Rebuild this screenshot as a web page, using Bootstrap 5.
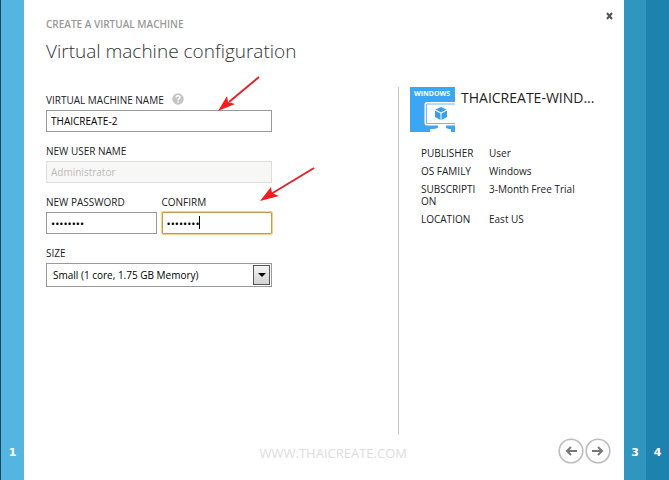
<!DOCTYPE html>
<html lang="en">
<head>
<meta charset="utf-8">
<meta name="viewport" content="width=device-width, initial-scale=1">
<title>Create a virtual machine</title>
<link href="https://cdn.jsdelivr.net/npm/bootstrap@5.3.0/dist/css/bootstrap.min.css" rel="stylesheet">
<style>
body { font: 10px/14px "Open Sans", "Noto Sans", sans-serif; color: #222; background: #fff; }
.step { width: 24px; padding-bottom: 20px; font: 700 11px/14px "DejaVu Sans", sans-serif; color: #fff; text-decoration: none; flex: none; }
.step-1 { background: #54b6e0; border-left: 1px solid #17475e; }
.step-3 { background: #3095bf; width: 22px; }
.step-4 { background: #1e82af; width: 23px; }
.wizard { padding: 17px 12px 16px 22px; }
.crumb { color: #999; font-weight: 600; }
h1 { font-size: 19px; line-height: 28px; font-weight: 300; color: #333; margin: 6px 0 22px; }
.close-x { top: 9px; right: 9px; width: 12px; height: 14px; }
.bare { border: 0; background: none; padding: 0; line-height: 0; }
.form-area { padding-top: 6px; }
.fields { max-width: 226px; }
.field { margin-bottom: 12px; }
.field label { line-height: 14px; margin-bottom: 3px; display: inline-block; }
.field .form-control, .field .form-select { height: 22px; min-height: 0; padding: 0 4px; border: 1px solid #999; border-radius: 0; font-size: 10px; line-height: 14px; color: #000; background: #fff; }
.field .form-control[type=password] { font-size: 11px; }
.field .form-control:disabled { background: #f7f7f6; border-color: #ddd; color: #bbb; }
.field .form-control.active-input { border-color: #c69a4b; box-shadow: 0 0 0 1px #f3d28c; border-radius: 1px; }
.field .form-select { height: 24px; padding: 0 24px 0 6px; appearance: none; }
.pair { gap: 5px; }
.caret-line { left: 37px; top: 4px; width: 1px; height: 13px; background: #000; }
.drop { right: 2px; top: 2px; width: 17px; height: 20px; border: 1px solid #555; background: linear-gradient(#f4f4f4, #d2d2d2); pointer-events: none; }
.pointer { overflow: visible; pointer-events: none; }
.pointer-1 { left: 171px; top: -17px; }
.pointer-2 { left: 97px; top: -29px; }
.summary { width: 214px; padding-left: 11px; border-left: 1px solid #c8c8c8; flex: none; }
.tile { margin-right: 6px; }
.summary-title { font-size: 14px; line-height: 20px; padding-top: 1px; }
.facts { margin: 15px 0 0 11px; }
.facts dt { width: 58px; font-weight: 400; word-break: break-all; margin-right: 10px; line-height: 12px; }
.facts dd { margin: 0; line-height: 12px; }
.facts div { margin-bottom: 6px; }
.foot { padding-top: 3px; }
.watermark { color: #ddd; font-size: 13px; line-height: 18px; margin-right: 151px; padding-top: 6px; }
</style>
<script src="https://cdn.jsdelivr.net/npm/bootstrap@5.3.0/dist/js/bootstrap.bundle.min.js"></script>
</head>
<body class="d-flex min-vh-100">
<a href="#" class="step step-1 d-flex align-items-end justify-content-center">1</a>
<main class="wizard flex-grow-1 position-relative d-flex flex-column">
  <button type="button" class="bare close-x position-absolute" aria-label="Close">
    <svg width="7" height="8" viewBox="0 0 7 8"><path d="M1 1l5 6M6 1L1 7" stroke="#555" stroke-width="2"/></svg>
  </button>
  <div class="crumb">CREATE A VIRTUAL MACHINE</div>
  <h1>Virtual machine configuration</h1>
  <div class="d-flex flex-grow-1">
    <form class="form-area flex-grow-1">
      <div class="fields">
        <div class="field">
          <div class="d-flex"><label for="vm">VIRTUAL MACHINE NAME</label>
            <svg class="ms-2" width="12" height="12" viewBox="0 0 12 12"><circle cx="6" cy="6" r="5.7" fill="#c4c4c4"/><path d="M4.1 4.5C4.1 2.2 8 2.1 8 4.4 8 5.8 6.1 5.8 6.1 7.2M6.1 8.2v1.5" fill="none" stroke="#fff" stroke-width="1.5"/></svg>
          </div>
          <div class="position-relative">
            <input id="vm" class="form-control" type="text" value="THAICREATE-2">
            <svg class="pointer pointer-1 position-absolute" width="43" height="35" viewBox="0 0 43 35"><path d="M42 -16L12 9" stroke="#df2529" stroke-width="2"/><path d="M1 18L10 3 11 9 18 11Z" fill="#f51c1f"/></svg>
          </div>
        </div>
        <div class="field">
          <label for="user">NEW USER NAME</label>
          <input id="user" class="form-control" type="text" value="Administrator" disabled>
        </div>
        <div class="field d-flex pair">
          <div class="flex-fill">
            <label for="pw">NEW PASSWORD</label>
            <input id="pw" class="form-control" type="password" value="password">
          </div>
          <div class="flex-fill">
            <label for="pw2">CONFIRM</label>
            <div class="position-relative">
              <input id="pw2" class="form-control active-input" type="password" value="password">
              <span class="caret-line position-absolute"></span>
              <svg class="pointer pointer-2 position-absolute" width="56" height="35" viewBox="0 0 56 35"><path d="M55 -15L12 11" stroke="#df2529" stroke-width="2"/><path d="M1 18L12 4 13 10 20 13Z" fill="#f51c1f"/></svg>
            </div>
          </div>
        </div>
        <div class="field">
          <label for="size">SIZE</label>
          <div class="position-relative">
            <select id="size" class="form-select"><option>Small (1 core, 1.75 GB Memory)</option></select>
            <span class="drop position-absolute d-flex align-items-center justify-content-center"><svg width="8" height="4" viewBox="0 0 8 4"><path d="M0 0h8L4 4z"/></svg></span>
          </div>
        </div>
      </div>
    </form>
    <aside class="summary">
      <div class="d-flex">
        <svg class="tile flex-shrink-0" width="45" height="45" viewBox="0 0 45 45">
          <path d="M0 0h45v45H0z" fill="#3ca6f2"/>
          <text x="4" y="9" font-family="Open Sans, sans-serif" font-size="7" font-weight="700" fill="#fff">WINDOWS</text>
          <path d="M45 15H17Q14.500 15 14.500 17.500V36Q14.500 38.500 17 38.500H45z" fill="#fff"/>
          <path d="M45 17H16.500V36.500H45" fill="none" stroke="#6cbcf5"/>
          <path d="M28 38h8v2q0 2 5 2v3H20v-3q8 0 8-2z" fill="#fff"/>
          <path d="M31 20l5.500 2.500L31 25.500 25.500 22.500zM25 23.500l5.500 3V33L25 30zM37 23.500V30l-5.500 3v-6.500z" fill="#36a0ee"/>
        </svg>
        <div class="summary-title text-nowrap">THAICREATE-WIND...</div>
      </div>
      <dl class="facts">
        <div class="d-flex"><dt>PUBLISHER</dt><dd>User</dd></div>
        <div class="d-flex"><dt>OS FAMILY</dt><dd>Windows</dd></div>
        <div class="d-flex"><dt>SUBSCRIPTION</dt><dd>3-Month Free Trial</dd></div>
        <div class="d-flex"><dt>LOCATION</dt><dd>East US</dd></div>
      </dl>
    </aside>
  </div>
  <footer class="foot d-flex justify-content-end mt-auto">
    <div class="watermark">WWW.THAICREATE.COM</div>
    <button type="button" class="bare" aria-label="Previous"><svg width="27" height="26" viewBox="0 0 27 26"><circle cx="13" cy="13" r="11.800" fill="#fff" stroke="#bdbdbd" stroke-width="1.600"/><path d="M19 13H9M13 9l-4 4 4 4" fill="none" stroke="#777" stroke-width="2"/></svg></button>
    <button type="button" class="bare" aria-label="Next"><svg width="27" height="26" viewBox="0 0 27 26"><circle cx="13" cy="13" r="11.800" fill="#fff" stroke="#bdbdbd" stroke-width="1.600"/><path d="M7 13h10M13 9l4 4-4 4" fill="none" stroke="#777" stroke-width="2"/></svg></button>
  </footer>
</main>
<a href="#" class="step step-3 d-flex align-items-end justify-content-center">3</a>
<a href="#" class="step step-4 d-flex align-items-end justify-content-center">4</a>
</body>
</html>
